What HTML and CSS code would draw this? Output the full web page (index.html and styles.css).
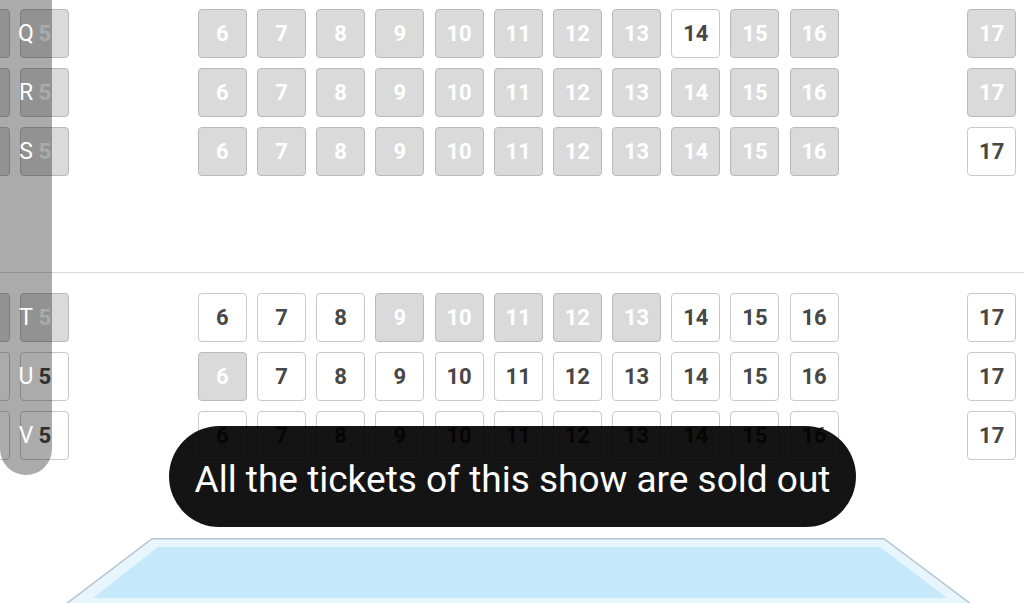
FILE: index.html
```html
<!DOCTYPE html>
<html>
<head>
<meta charset="utf-8">
<link rel="stylesheet" href="styles.css">
</head>
<body>
<div class="page">
  <div class="map">
    <div class="block block-top">
      <div class="row">
        <div class="seat sold"></div><div class="seat sold">5</div><div class="gap"></div><div class="gap"></div>
        <div class="seat sold">6</div><div class="seat sold">7</div><div class="seat sold">8</div><div class="seat sold">9</div><div class="seat sold">10</div><div class="seat sold">11</div><div class="seat sold">12</div><div class="seat sold">13</div><div class="seat">14</div><div class="seat sold">15</div><div class="seat sold">16</div>
        <div class="gap"></div><div class="gap"></div><div class="seat sold">17</div>
      </div>
      <div class="row">
        <div class="seat sold"></div><div class="seat sold">5</div><div class="gap"></div><div class="gap"></div>
        <div class="seat sold">6</div><div class="seat sold">7</div><div class="seat sold">8</div><div class="seat sold">9</div><div class="seat sold">10</div><div class="seat sold">11</div><div class="seat sold">12</div><div class="seat sold">13</div><div class="seat sold">14</div><div class="seat sold">15</div><div class="seat sold">16</div>
        <div class="gap"></div><div class="gap"></div><div class="seat sold">17</div>
      </div>
      <div class="row">
        <div class="seat sold"></div><div class="seat sold">5</div><div class="gap"></div><div class="gap"></div>
        <div class="seat sold">6</div><div class="seat sold">7</div><div class="seat sold">8</div><div class="seat sold">9</div><div class="seat sold">10</div><div class="seat sold">11</div><div class="seat sold">12</div><div class="seat sold">13</div><div class="seat sold">14</div><div class="seat sold">15</div><div class="seat sold">16</div>
        <div class="gap"></div><div class="gap"></div><div class="seat">17</div>
      </div>
    </div>
    <div class="divider"></div>
    <div class="block block-bottom">
      <div class="row">
        <div class="seat sold"></div><div class="seat sold">5</div><div class="gap"></div><div class="gap"></div>
        <div class="seat">6</div><div class="seat">7</div><div class="seat">8</div><div class="seat sold">9</div><div class="seat sold">10</div><div class="seat sold">11</div><div class="seat sold">12</div><div class="seat sold">13</div><div class="seat">14</div><div class="seat">15</div><div class="seat">16</div>
        <div class="gap"></div><div class="gap"></div><div class="seat">17</div>
      </div>
      <div class="row">
        <div class="seat"></div><div class="seat">5</div><div class="gap"></div><div class="gap"></div>
        <div class="seat sold">6</div><div class="seat">7</div><div class="seat">8</div><div class="seat">9</div><div class="seat">10</div><div class="seat">11</div><div class="seat">12</div><div class="seat">13</div><div class="seat">14</div><div class="seat">15</div><div class="seat">16</div>
        <div class="gap"></div><div class="gap"></div><div class="seat">17</div>
      </div>
      <div class="row">
        <div class="seat"></div><div class="seat">5</div><div class="gap"></div><div class="gap"></div>
        <div class="seat">6</div><div class="seat">7</div><div class="seat">8</div><div class="seat">9</div><div class="seat">10</div><div class="seat">11</div><div class="seat">12</div><div class="seat">13</div><div class="seat">14</div><div class="seat">15</div><div class="seat">16</div>
        <div class="gap"></div><div class="gap"></div><div class="seat">17</div>
      </div>
    </div>
    <div class="screen">
      <svg width="1024" height="65" viewBox="0 0 1024 65">
        <polygon points="152,0.75 884,0.75 971,66 66,66" fill="#e7f5fd" stroke="#b7c4d0" stroke-width="1.5"/>
        <polygon points="158,9 880,9 947,60 93,60" fill="#c6e8fb"/>
      </svg>
    </div>
  </div>

  <div class="labels">
    <div class="label-group label-top">
      <div class="label">Q</div>
      <div class="label">R</div>
      <div class="label">S</div>
    </div>
    <div class="label-group label-bottom">
      <div class="label">T</div>
      <div class="label">U</div>
      <div class="label">V</div>
    </div>
  </div>

  <div class="toast">All the tickets of this show are sold out</div>
</div>
</body>
</html>
```

FILE: styles.css
```css
* { box-sizing: border-box; }
html, body {
  margin: 0;
  padding: 0;
  background: #ffffff;
  overflow: hidden;
}
.page {
  position: relative;
  width: 1024px;
  height: 603px;
  overflow: hidden;
  font-family: Roboto, "Liberation Sans", sans-serif;
}
.map {
  display: flex;
  flex-direction: column;
}
.block {
  display: flex;
  flex-direction: column;
  gap: 10px;
  margin-left: -39px;
}
.block-top { padding-top: 9px; }
.block-bottom { padding-top: 20px; }
.divider {
  margin-top: 96px;
  height: 1px;
  background: #d9d9d9;
}
.row {
  display: flex;
  gap: 10.2px;
}
.seat, .gap {
  flex: 0 0 49px;
  width: 49px;
  height: 49px;
}
.seat {
  display: flex;
  align-items: center;
  justify-content: center;
  border: 1px solid #c9c9c9;
  border-radius: 4px;
  background: #ffffff;
  color: #474747;
  font-size: 22px;
  font-weight: 700;
}
.seat.sold {
  background: #dadada;
  border-color: #b9b9b9;
  color: #ffffff;
}
.screen {
  margin-top: 78px;
  height: 65px;
}
.screen svg { display: block; }

.labels {
  position: absolute;
  left: 0;
  top: 0;
  width: 52px;
  height: 475px;
  background: rgba(0, 0, 0, 0.33);
  border-radius: 0 0 26px 26px;
  display: flex;
  flex-direction: column;
}
.label-group {
  display: flex;
  flex-direction: column;
  gap: 10px;
}
.label-top { padding-top: 9px; }
.label-bottom { padding-top: 117px; }
.label {
  height: 49px;
  display: flex;
  align-items: center;
  justify-content: center;
  color: #ffffff;
  font-size: 23px;
  font-weight: 400;
}
.toast {
  position: absolute;
  left: 169px;
  top: 426px;
  width: 687px;
  height: 101px;
  border-radius: 51px;
  background: rgba(0, 0, 0, 0.92);
  color: #ffffff;
  font-size: 37px;
  display: flex;
  align-items: center;
  justify-content: center;
  padding-top: 6px;
}
```
